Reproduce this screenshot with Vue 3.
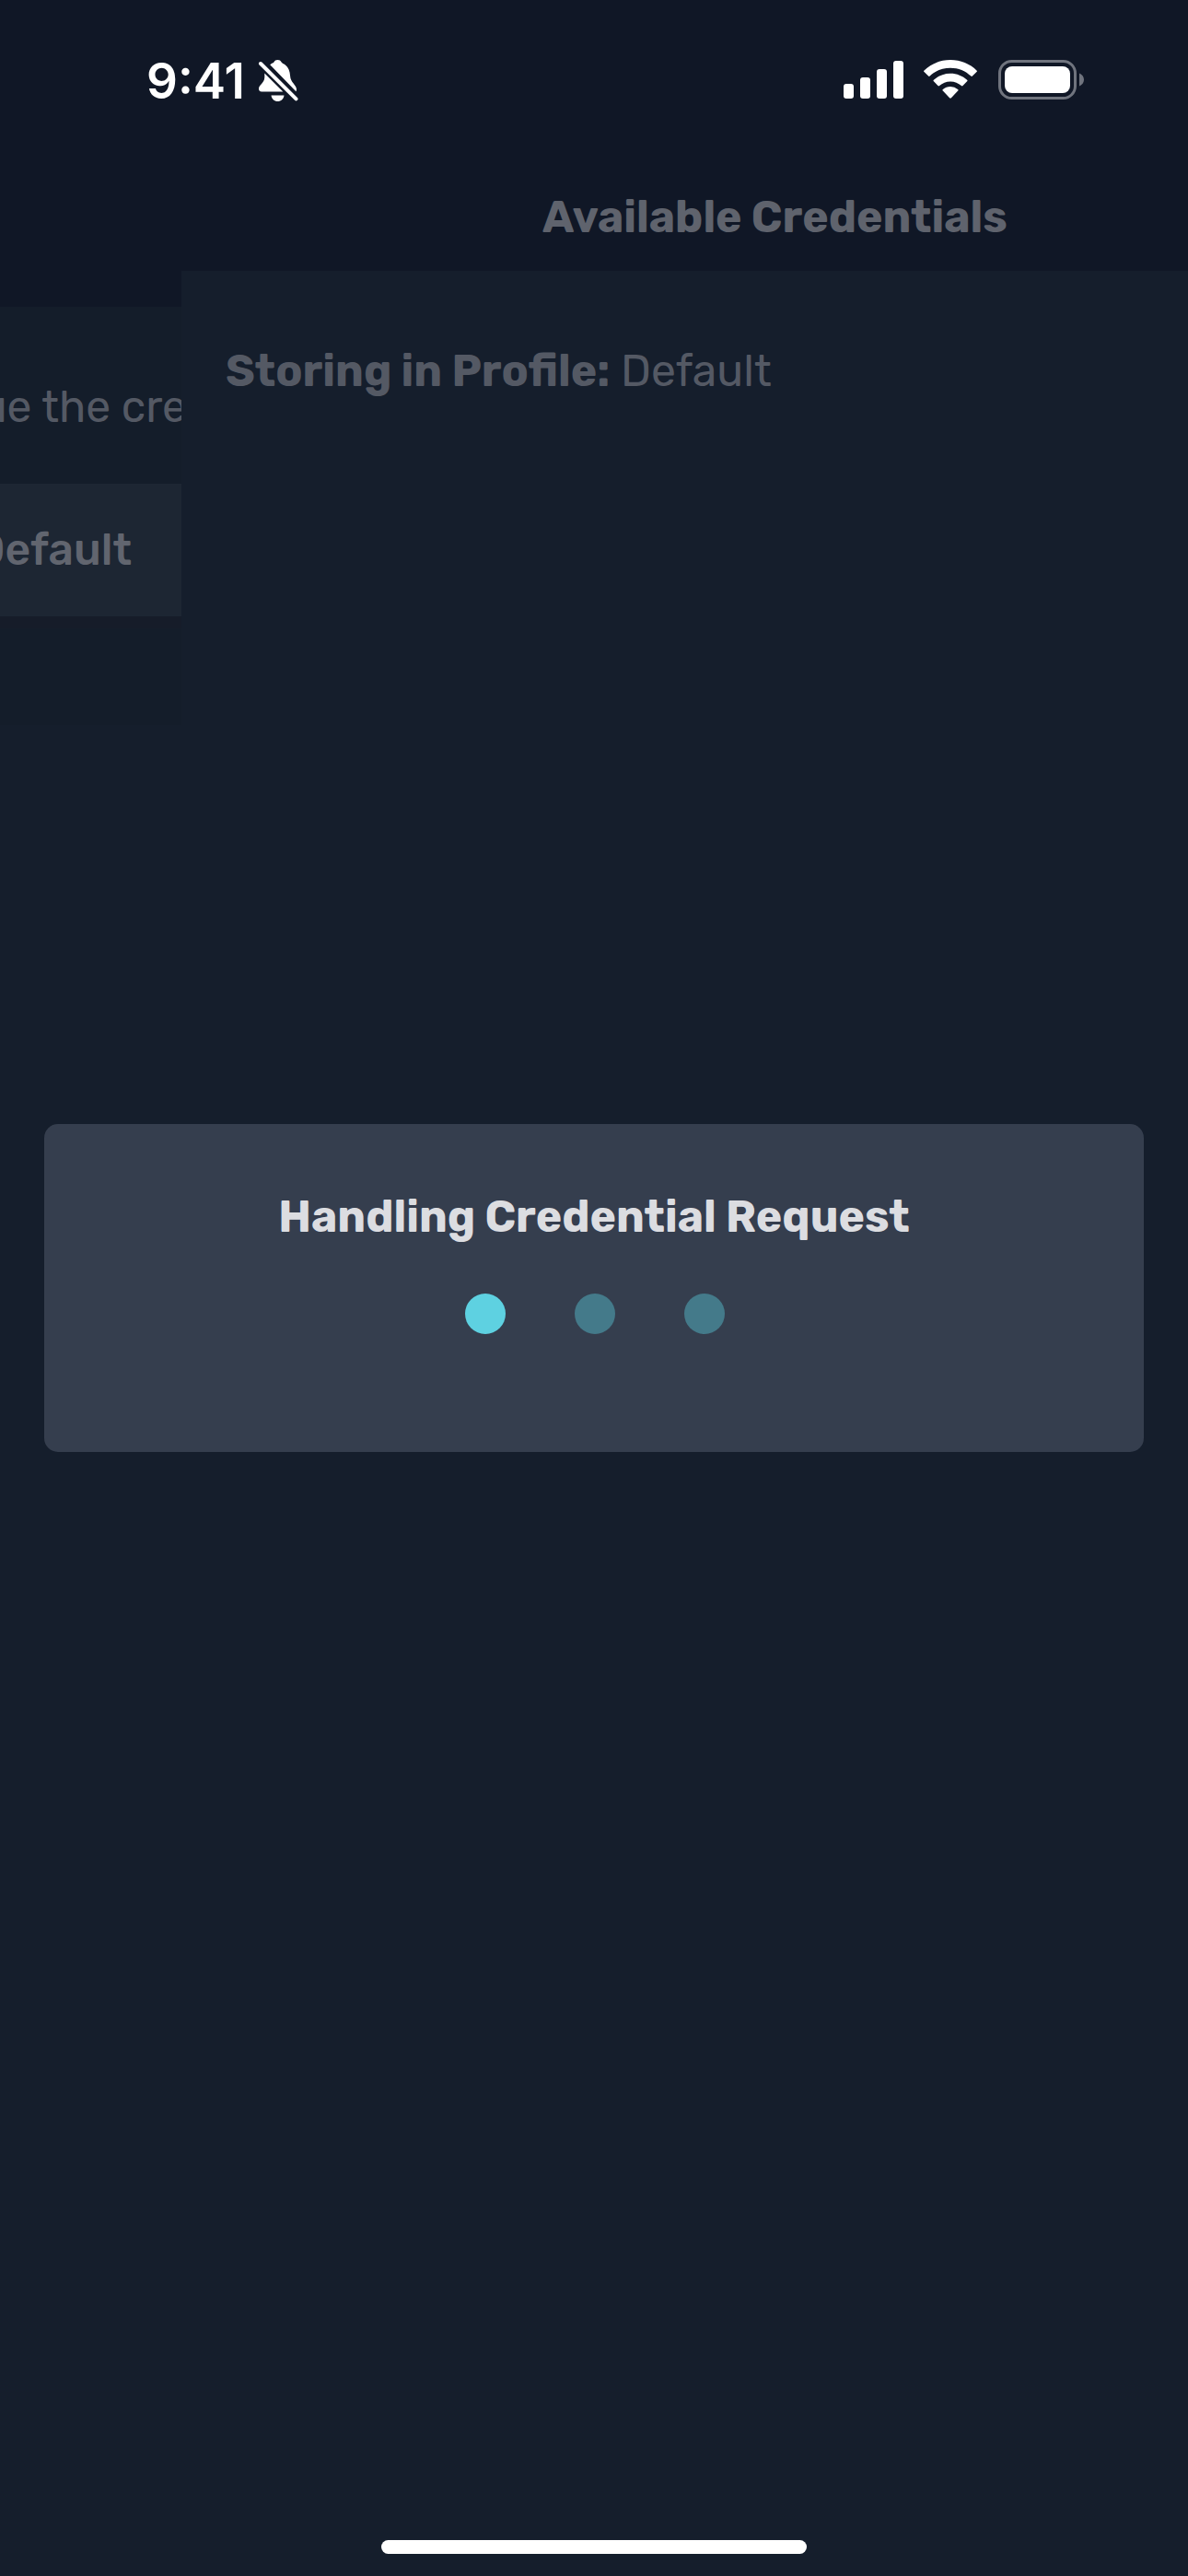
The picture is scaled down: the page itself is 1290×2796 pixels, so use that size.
<script setup>
const bars = [16, 23, 32, 41]
const dots = [true, false, false]
</script>

<template>
  <main class="screen">
    <div class="pages">
      <section class="page previous">
        <div class="nav tall"></div>
        <p class="hint">ue the cre</p>
        <div class="row"><span class="row-label">Default</span></div>
        <div class="divider"></div>
      </section>
      <section class="page current">
        <header class="nav"><h1 class="title">Available Credentials</h1></header>
        <p class="profile"><b class="storing">Storing in Profile:</b> Default</p>
      </section>
    </div>

    <div class="status">
      <span class="time">9:41</span>
      <svg class="bell" width="44" height="48" viewBox="0 0 44 48" fill="#fff">
        <path d="M7.300 14.500 27.300 34.500H4.200C1.800 34.500 1 32.800 1 31.200c0-4 6-6 6.300-12.200Z" />
        <path d="M13.200 5.200c2-1.600 3.500-1.700 4-2.400C18.300.7 19.600 0 21.500 0s3.200.7 4.300 2.800c.5.900 2 1.200 4 2.700 3.400 2.500 5 6.500 5.300 12 .3 7 6.900 9.800 6.900 14.500 0 1-.2 1.700-.6 2.300Z" />
        <path d="M14.500 38.500h14c-.6 4-3.300 6.500-7 6.500s-6.400-2.500-7-6.500Z" />
        <path d="m3 4 38.500 38.300" stroke="#101726" stroke-width="7.500" stroke-linecap="round" />
        <path d="m3 4 38.500 38.300" stroke="#fff" stroke-width="4" stroke-linecap="round" />
      </svg>
      <div class="signal">
        <i v-for="h in bars" :key="h" class="bar" :style="{ height: h + 'px' }"></i>
      </div>
      <svg class="wifi" width="58" height="43" viewBox="0 0 58 43" fill="#fff">
        <path d="M29 0C18 0 7.800 4.200.5 11.400c-.6.600-.6 1 0 1.600l4.600 4.600c.6.500 1 .5 1.600 0C12.600 11.900 20.300 8.700 29 8.700s16.400 3.200 22.300 8.900c.6.500 1 .5 1.600 0l4.600-4.600c.6-.6.600-1 0-1.600C50.200 4.200 40 0 29 0Z" />
        <path d="M29 14.700c-7 0-13.300 2.700-18.100 7-.6.600-.6 1 0 1.600l4.600 4.700c.5.500 1 .5 1.600 0 3.200-2.900 7.300-4.600 11.900-4.600s8.700 1.700 11.900 4.600c.6.500 1.100.5 1.600 0l4.600-4.700c.6-.6.600-1 0-1.600-4.800-4.300-11.100-7-18.100-7Z" />
        <path d="M29 29c-3.100 0-5.900 1.100-8.100 2.900-.7.600-.7 1.100-.1 1.700l7.300 7.600c.6.600 1.200.6 1.800 0l7.300-7.600c.6-.6.600-1.100-.1-1.700A12.700 12.700 0 0 0 29 29Z" />
      </svg>
      <svg class="battery" width="94" height="44" viewBox="0 0 94 44">
        <rect x="1.500" y="1.500" width="82" height="40" rx="13" fill="none" stroke="#70747e" stroke-width="3" />
        <rect x="7" y="7" width="71" height="29" rx="8" fill="#fff" />
        <path d="M88 14.500c3 1.200 5 4 5 7s-2 5.800-5 7Z" fill="#70747e" />
      </svg>
    </div>

    <div class="overlay">
      <div class="dialog" role="dialog">
        <h2 class="dialog-title">Handling Credential Request</h2>
        <div class="dots"><i v-for="(on, k) in dots" :key="k" class="dot" :class="{ on }"></i></div>
      </div>
    </div>
    <div class="home"></div>
  </main>
</template>

<style>
body { margin: 0; background: #151e2c; }
</style>

<style scoped>
.screen {
  position: relative;
  width: 1290px;
  height: 2796px;
  overflow: hidden;
  background: #151e2c;
  color: #545964;
  font: 400 48px/60px Rubik, Inter, sans-serif;
}
h1, h2, p { margin: 0; font-size: 48px; line-height: 60px; white-space: nowrap; }
.pages { display: flex; height: 100%; }
.page { display: flex; flex-direction: column; overflow: hidden; }
.previous { width: 197px; background: linear-gradient(#141d2a 787px, #151e2c 787px); }
.current { flex: 1; }
.nav { box-sizing: border-box; height: 294px; background: #101726; }
.tall { height: 333px; }
.hint { align-self: flex-end; margin: 79px -6px 0 0; height: 113px; }
.row { height: 144px; background: #1d2633; display: flex; align-items: center; justify-content: flex-end; }
.row-label { margin-right: 54px; font-weight: 500; color: #61656f; }
.divider { height: 13px; background: #161c29; }
.current .nav { padding: 206px 0 0 392px; }
.title { font-weight: 700; color: #5f636d; }
.profile { padding: 79px 0 0 48px; }
.storing { font-weight: 700; }
.status { position: absolute; inset: 0 0 auto; height: 170px; display: flex; align-items: flex-start; }
.time { margin: 58px 0 0 159px; width: 121px; font: 600 53px/60px Inter, sans-serif; color: #fff; }
.bell { margin-top: 65px; }
.signal { display: flex; align-items: flex-end; gap: 7px; height: 41px; margin: 66px 0 0 592px; }
.bar { width: 11px; border-radius: 3px; background: #fff; }
.wifi { margin: 65px 0 0 22px; }
.battery { margin: 65px 0 0 23px; }
.overlay { position: absolute; inset: 0; display: flex; align-items: center; justify-content: center; }
.dialog {
  box-sizing: border-box;
  width: 1194px;
  height: 356px;
  padding-top: 71px;
  border-radius: 15px;
  background: #353e4e;
  display: flex;
  flex-direction: column;
  align-items: center;
}
.dialog-title { font-weight: 700; color: #dcdde1; }
.dots { display: flex; gap: 75px; margin: 53px 0 0 2px; }
.dot { width: 44px; height: 44px; border-radius: 50%; background: #447a8a; }
.dot.on { background: #5ed1e1; }
.home { position: absolute; left: 414px; bottom: 24px; width: 462px; height: 15px; border-radius: 8px; background: #fff; }
</style>
